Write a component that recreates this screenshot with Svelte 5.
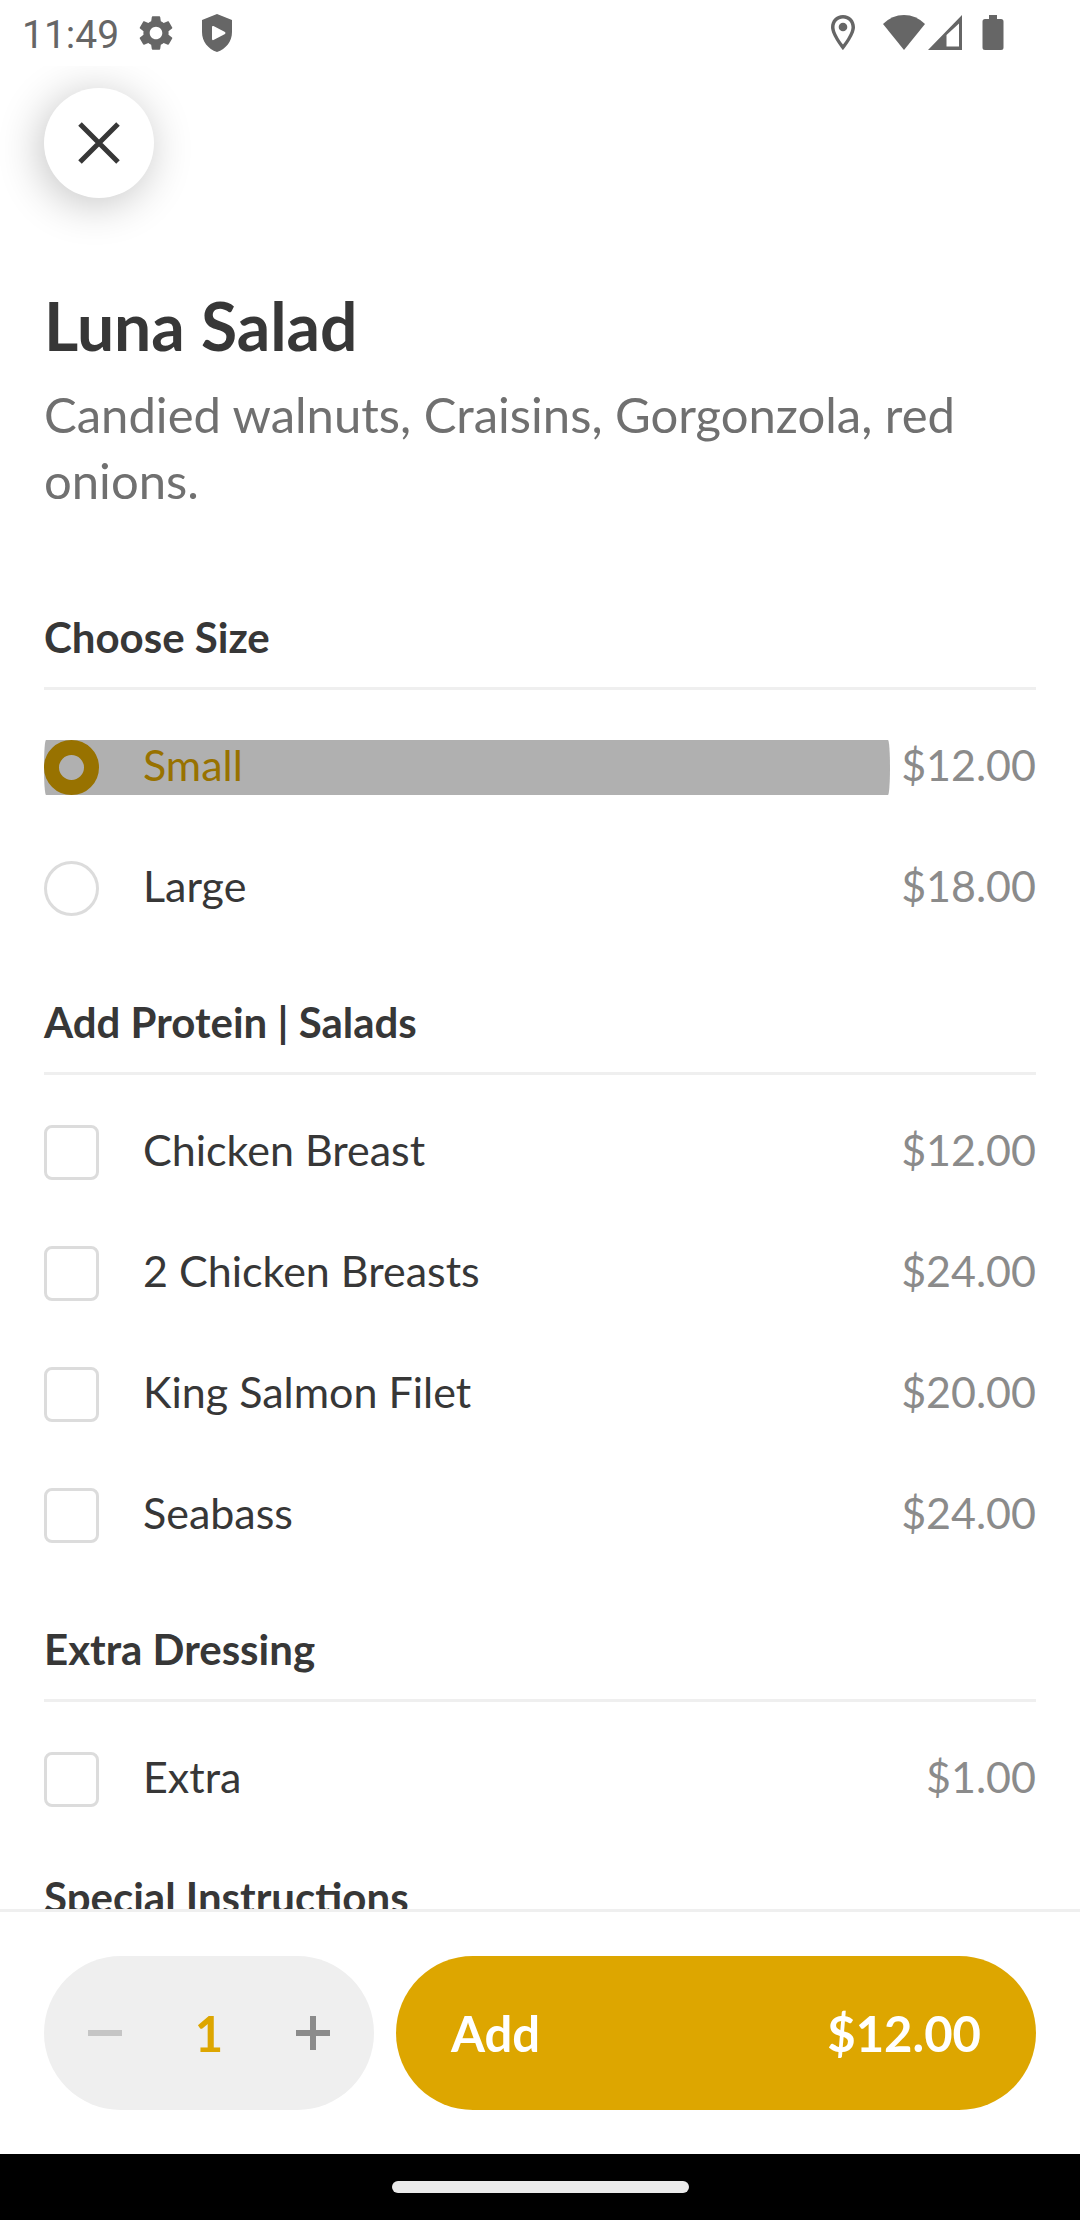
<script lang="ts">
  type Option = { id: string; name: string; price: number };

  const sizes: Option[] = [
    { id: 'small', name: 'Small', price: 12 },
    { id: 'large', name: 'Large', price: 18 }
  ];

  const addOnGroups: { title: string; options: Option[] }[] = [
    {
      title: 'Add Protein | Salads',
      options: [
        { id: 'chicken', name: 'Chicken Breast', price: 12 },
        { id: 'chicken-2', name: '2 Chicken Breasts', price: 24 },
        { id: 'salmon', name: 'King Salmon Filet', price: 20 },
        { id: 'seabass', name: 'Seabass', price: 24 }
      ]
    },
    {
      title: 'Extra Dressing',
      options: [{ id: 'extra', name: 'Extra', price: 1 }]
    }
  ];

  let size = $state('small');
  let pressed = $state('small');
  let addOns = $state<string[]>([]);
  let quantity = $state(1);

  // Base price of the chosen size plus every ticked add-on, times quantity.
  const total = $derived.by(() => {
    const base = sizes.find((s) => s.id === size)?.price ?? 0;
    const extras = addOnGroups
      .flatMap((g) => g.options)
      .filter((o) => addOns.includes(o.id))
      .reduce((sum, o) => sum + o.price, 0);
    return (base + extras) * quantity;
  });

  const money = (n: number) => '$' + n.toFixed(2);
</script>

<div class="screen">
  <header class="status">
    <span class="time">11:49</span>
    <svg class="gear" width="42" height="42" viewBox="0 0 24 24">
      <path d="M19.14 12.94c.04-.3.06-.61.06-.94 0-.32-.02-.64-.07-.94l2.03-1.58c.18-.14.23-.41.12-.61l-1.92-3.32c-.12-.22-.37-.29-.59-.22l-2.39.96c-.5-.38-1.03-.7-1.62-.94l-.36-2.54c-.04-.24-.24-.41-.48-.41h-3.84c-.24 0-.43.17-.47.41l-.36 2.54c-.59.24-1.13.57-1.62.94l-2.39-.96c-.22-.08-.47 0-.59.22L2.74 8.87c-.12.21-.08.47.12.61l2.03 1.58c-.05.3-.09.63-.09.94s.02.64.07.94l-2.03 1.58c-.18.14-.23.41-.12.61l1.92 3.32c.12.22.37.29.59.22l2.39-.96c.5.38 1.03.7 1.62.94l.36 2.54c.05.24.24.41.48.41h3.84c.24 0 .44-.17.47-.41l.36-2.54c.59-.24 1.13-.56 1.62-.94l2.39.96c.22.08.47 0 .59-.22l1.92-3.32c.12-.22.07-.47-.12-.61l-2.01-1.58zM12 15.6c-1.98 0-3.6-1.62-3.6-3.6s1.62-3.6 3.6-3.6 3.6 1.62 3.6 3.6-1.62 3.6-3.6 3.6z" />
    </svg>
    <svg class="shield" width="32" height="38" viewBox="0 0 32 38">
      <path fill-rule="evenodd" d="M16 0 31 6v12c0 9.500-6 17-15 20C7 35 1 27.500 1 18V6zM11 13v12q0 1.500 1.500 1L24 20q1-1 0-2L12.500 12q-1.500-.5-1.500 1z" />
    </svg>
    <div class="right">
      <svg class="pin" width="26" height="36" viewBox="0 0 26 36">
        <path fill-rule="evenodd" d="M13 0C6 0 1 5.300 1 12.200 1 20.500 13 35 13 35s12-14.500 12-22.800C25 5.300 20 0 13 0zm0 3.500c5 0 8.500 3.800 8.500 8.700 0 5-5 12.800-8.500 17.300C9.500 25 4.500 17.200 4.500 12.200c0-4.900 3.500-8.700 8.500-8.700z" />
        <circle cx="13" cy="12" r="4.300" />
      </svg>
      <svg class="wifi" width="42" height="36" viewBox="0 0 42 36">
        <path d="M0 9Q9 0 21 0t21 9L21 35z" />
      </svg>
      <svg class="signal" width="34" height="36" viewBox="0 0 34 36">
        <path fill-rule="evenodd" d="M34 0v35H0zM31 8.500 18.500 20v11.500H31z" />
      </svg>
      <svg class="battery" width="22" height="36" viewBox="0 0 22 36">
        <path d="M7 0h8v4h4q2.500 0 2.500 2.500v26q0 2.500-2.500 2.500H3Q.5 35 .5 32.500v-26Q.5 4 3 4h4z" />
      </svg>
    </div>
  </header>

  <main>
    <button class="close" aria-label="Close">
      <svg width="42" height="42" viewBox="0 0 42 42">
        <path d="M2 2l38 38M40 2 2 40" />
      </svg>
    </button>

    <h1>Luna Salad</h1>
    <p class="description">Candied walnuts, Craisins, Gorgonzola, red onions.</p>

    <section>
      <h2>Choose Size</h2>
      {#each sizes as option (option.id)}
        <div class="row">
          <label class:pressed={pressed === option.id} class:selected={size === option.id}>
            <input
              type="radio"
              name="size"
              value={option.id}
              bind:group={size}
              onchange={() => (pressed = '')}
            />
            <span>{option.name}</span>
          </label>
          <span class="price">{money(option.price)}</span>
        </div>
      {/each}
    </section>

    {#each addOnGroups as group (group.title)}
      <section>
        <h2>{group.title}</h2>
        {#each group.options as option (option.id)}
          <div class="row">
            <label class:selected={addOns.includes(option.id)}>
              <input type="checkbox" value={option.id} bind:group={addOns} />
              <span>{option.name}</span>
            </label>
            <span class="price">{money(option.price)}</span>
          </div>
        {/each}
      </section>
    {/each}

    <section class="instructions">
      <h2>Special Instructions</h2>
    </section>
  </main>

  <footer>
    <div class="stepper">
      <button aria-label="Decrease quantity" disabled={quantity === 1} onclick={() => quantity--}>
        <svg width="34" height="34" viewBox="0 0 34 34"><path d="M0 17h34" /></svg>
      </button>
      <output>{quantity}</output>
      <button aria-label="Increase quantity" onclick={() => quantity++}>
        <svg width="34" height="34" viewBox="0 0 34 34"><path d="M0 17h34M17 0v34" /></svg>
      </button>
    </div>
    <button class="add">
      <span>Add</span>
      <span>{money(total)}</span>
    </button>
  </footer>

  <div class="nav"><div class="handle"></div></div>
</div>

<style>
  :global(body) { margin: 0; background: #fff; }

  .screen {
    display: flex;
    flex-direction: column;
    height: 100vh;
    font-family: Lato, 'Liberation Sans', sans-serif;
    color: #373737;
    background: #fff;
  }
  button { font: inherit; border: 0; padding: 0; cursor: pointer; }
  svg { display: block; flex: none; }

  /* status bar */
  .status {
    display: flex;
    flex: none;
    align-items: center;
    height: 66px;
    padding: 0 76px 0 22px;
    box-sizing: border-box;
    font-family: Roboto, sans-serif;
    color: #666;
    fill: #666;
  }
  .time { padding-top: 3px; font-size: 39px; line-height: 48px; }
  .gear { margin-left: 16px; }
  .shield { margin-left: 24px; }
  .right { display: flex; align-items: center; margin-left: auto; }
  .wifi { margin-left: 27px; }
  .signal { margin-left: 3px; }
  .battery { margin-left: 20px; }

  main { flex: 1; min-height: 0; overflow: hidden; padding: 22px 44px 0; }
  .close {
    display: flex;
    align-items: center;
    justify-content: center;
    width: 110px;
    height: 110px;
    border-radius: 50%;
    background: #fff;
    box-shadow: -4px 6px 44px rgba(0, 0, 0, 0.24);
  }
  .close svg { stroke: #373737; stroke-width: 5; }

  h1 { margin: 88px 0 0; font-size: 66px; line-height: 80px; font-weight: 700; }
  .description { margin: 15px 0 0; font-size: 49px; line-height: 66px; color: #707070; }

  section { margin-top: 100px; }
  section + section { margin-top: 82px; }
  section + section.instructions { margin-top: 66px; }
  h2 {
    margin: 0 0 50px;
    padding-bottom: 26px;
    border-bottom: 3px solid #efefef;
    font-size: 42px;
    line-height: 48px;
    font-weight: 700;
  }

  .row { display: flex; align-items: center; gap: 11px; }
  .row + .row { margin-top: 66px; }
  label {
    position: relative;
    flex: 1;
    display: flex;
    align-items: center;
    gap: 44px;
    height: 55px;
    font-size: 43px;
  }
  label span, .price { line-height: 48px; padding-bottom: 6px; }
  .price { font-size: 43px; color: #8b8b8b; }
  .selected { color: #dda600; }
  /* touch feedback drawn over the whole label */
  .pressed::after {
    content: '';
    position: absolute;
    inset: 0;
    border-radius: 2px / 50%;
    background: rgba(0, 0, 0, 0.31);
  }

  input {
    appearance: none;
    box-sizing: border-box;
    flex: none;
    width: 55px;
    height: 55px;
    margin: 0;
    border: 3px solid #dcdcdc;
    border-radius: 8px;
    background: #fff;
  }
  input[type='radio'] { border-radius: 50%; }
  input:checked { border: 15px solid #dda600; }

  /* bottom bar */
  footer {
    display: flex;
    flex: none;
    gap: 22px;
    padding: 44px;
    border-top: 3px solid #efefef;
    font-size: 49px;
    line-height: 58px;
    font-weight: 700;
  }
  .stepper {
    display: flex;
    flex: none;
    align-items: center;
    justify-content: space-between;
    width: 330px;
    height: 154px;
    padding: 0 44px;
    box-sizing: border-box;
    border-radius: 77px;
    background: #efefef;
  }
  .stepper button { background: none; }
  .stepper svg { stroke: #8b8b8b; stroke-width: 6; }
  .stepper button:disabled svg { stroke: #c5c5c5; }
  output { color: #dda600; }
  .add {
    flex: 1;
    display: flex;
    align-items: center;
    justify-content: space-between;
    padding: 0 55px;
    border-radius: 77px;
    background: #dda600;
    color: #fff;
  }

  .nav {
    display: flex;
    flex: none;
    align-items: center;
    justify-content: center;
    height: 66px;
    background: #000;
  }
  .handle { width: 297px; height: 12px; border-radius: 6px; background: #eaeaea; }
</style>
